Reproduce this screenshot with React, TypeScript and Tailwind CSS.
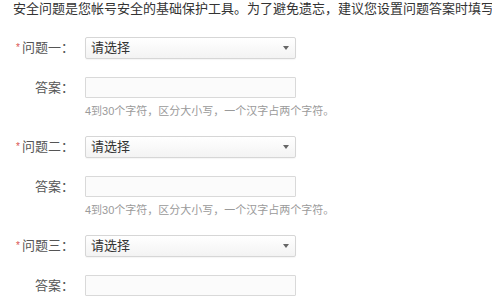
import React from "react";

const font = { fontFamily: '"Liberation Sans", "Noto Sans CJK SC", sans-serif' };

function QuestionBlock({ name, showHint }: { name: string; showHint: boolean }) {
  return (
    <div>
      <div className="flex items-center h-[22px]">
        <div className="w-[74px] text-right text-[13px] leading-[22px] text-[#555]">
          <span className="text-[#d9534f] text-[10px] align-top mr-[2px]">*</span>
          {name}：
        </div>
        <div className="ml-[11px] w-[211px] h-[22px] border border-[#d6d6d6] rounded-[2px] bg-gradient-to-b from-white to-[#f3f3f3] flex items-center justify-between pl-[5px] pr-[6px] shadow-[0_1px_1px_rgba(0,0,0,0.04)]">
          <span className="text-[13px] text-[#333]">请选择</span>
          <span className="w-0 h-0 border-l-[3.5px] border-r-[3.5px] border-t-[4px] border-l-transparent border-r-transparent border-t-[#666]" />
        </div>
      </div>
      <div className="flex items-center h-[21px] mt-[18px]">
        <div className="w-[74px] text-right text-[13px] leading-[21px] text-[#555]">答案：</div>
        <div className="ml-[11px] w-[211px] h-[21px] border border-[#d9d9d9] bg-[#fbfbfb] rounded-[1px]" />
      </div>
      {showHint && (
        <div className="ml-[85px] mt-[6px] text-[11px] leading-[14px] text-[#9a9a9a] whitespace-nowrap">
          4到30个字符，区分大小写，一个汉字占两个字符。
        </div>
      )}
    </div>
  );
}

export default function App() {
  return (
    <div className="w-[492px] h-[303px] overflow-hidden bg-white" style={font}>
      <p className="pl-[13px] pt-[1px] text-[13px] leading-[16px] text-[#333] whitespace-nowrap">
        安全问题是您帐号安全的基础保护工具。为了避免遗忘，建议您设置问题答案时填写
      </p>
      <div className="mt-[20px] flex flex-col gap-[18px]">
        <QuestionBlock name="问题一" showHint />
        <QuestionBlock name="问题二" showHint />
        <QuestionBlock name="问题三" showHint={false} />
      </div>
    </div>
  );
}
